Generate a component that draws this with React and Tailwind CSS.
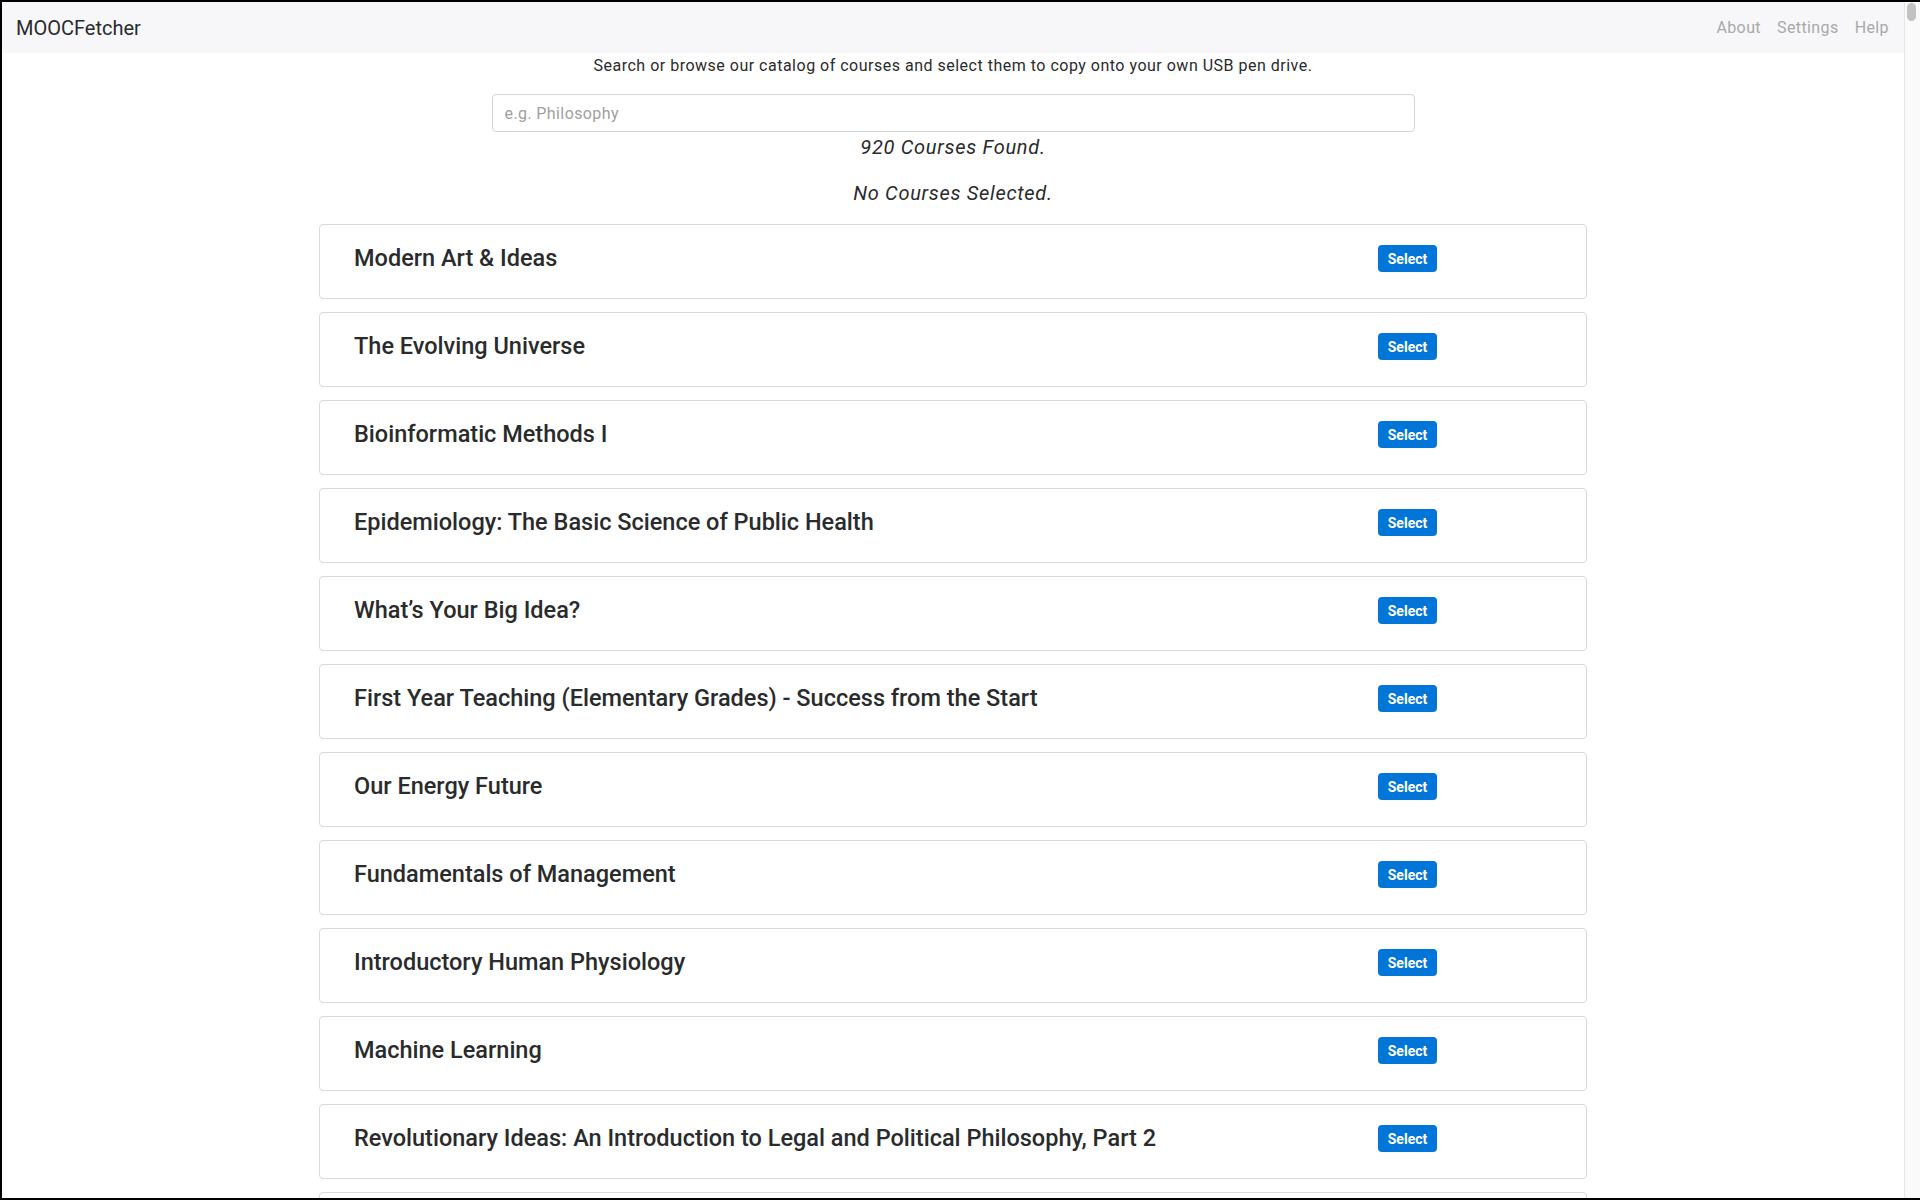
import React from 'react';

const courses = [
  'Modern Art & Ideas',
  'The Evolving Universe',
  'Bioinformatic Methods I',
  'Epidemiology: The Basic Science of Public Health',
  'What’s Your Big Idea?',
  'First Year Teaching (Elementary Grades) - Success from the Start',
  'Our Energy Future',
  'Fundamentals of Management',
  'Introductory Human Physiology',
  'Machine Learning',
  'Revolutionary Ideas: An Introduction to Legal and Political Philosophy, Part 2',
  'Introduction to Psychology',
];

const font = { fontFamily: 'Roboto, "Liberation Sans", sans-serif' };

const CourseCard = ({ title }) => (
  <div className="w-[1268px] h-[75px] mb-[13px] shrink-0 border border-[#d9d9d9] rounded-[4px] bg-white flex items-center pl-[34px] pb-[6px]">
    <div className="w-[1024px] text-[23.5px] font-medium text-[#292b2c] leading-none">{title}</div>
    <button className="w-[59px] h-[27px] rounded-[4px] bg-[#0275d8] text-white text-[14px] font-bold leading-none">
      Select
    </button>
  </div>
);

export default function App() {
  return (
    <div
      className="w-[1920px] h-[1200px] overflow-hidden flex border-t-2 border-l-2 border-b-2 border-black bg-white"
      style={font}
    >
      <div className="flex-1 flex flex-col min-w-0">
        <nav className="h-[51px] shrink-0 bg-[#f7f7f9] flex items-center justify-between pl-[14px] pr-[15px]">
          <span className="text-[20px] text-[#292b2c]">MOOCFetcher</span>
          <div className="flex gap-[16px] text-[16px] tracking-[0.4px] text-[#a9a9a9]">
            <span>About</span>
            <span>Settings</span>
            <span>Help</span>
          </div>
        </nav>

        <div className="flex flex-col items-center">
          <p className="mt-[1px] text-[16px] leading-[24px] tracking-[0.5px] text-[#292b2c]">
            Search or browse our catalog of courses and select them to copy onto your own USB pen drive.
          </p>
          <input
            className="mt-[16px] w-[923px] h-[38px] border border-[#d4d4d4] rounded-[4px] px-[12px] text-[16px] tracking-[0.4px] placeholder-[#a0a0a0] outline-none"
            placeholder="e.g. Philosophy"
          />
          <p className="text-[20px] leading-[30px] italic tracking-[0.7px] text-[#292b2c]">920 Courses Found.</p>
          <p className="mt-[16px] mb-[16px] text-[20px] leading-[30px] italic tracking-[0.7px] text-[#292b2c]">No Courses Selected.</p>
          {courses.map((c) => (
            <CourseCard key={c} title={c} />
          ))}
        </div>
      </div>

      <div className="w-[16px] shrink-0 bg-[#fafafa] border-l border-[#e6e6e6] pt-[1px] pl-[2px]">
        <div className="w-[9px] h-[18px] rounded-full bg-[#c2c2c2]" />
      </div>
    </div>
  );
}
